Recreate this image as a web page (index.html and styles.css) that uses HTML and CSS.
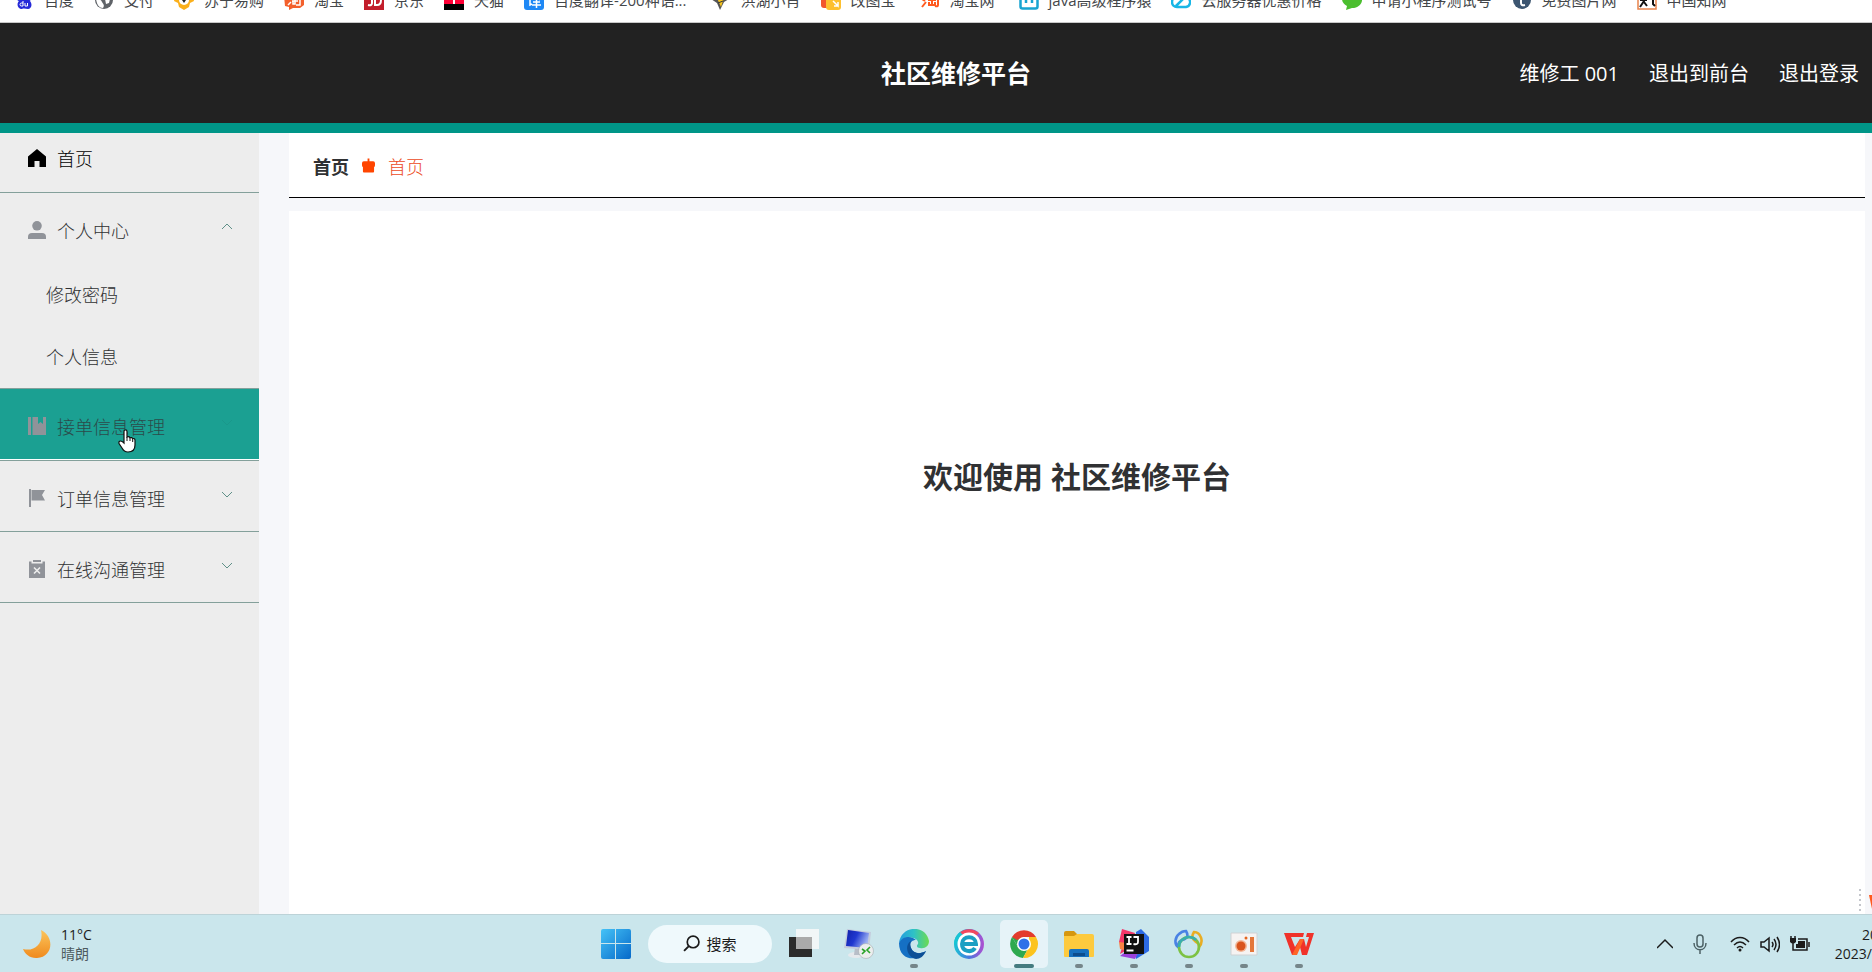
FILE: index.html
```
<!DOCTYPE html>
<html lang="zh-CN">
<head>
    <meta charset="UTF-8">
    <meta name="viewport" content="width=device-width, initial-scale=1.0">
    <title>社区维修平台</title>
    <link rel="stylesheet" href="styles.css">
</head>
<body>

    <!-- 书签栏 -->
    <nav class="bookmarks">
        <a href="#"><svg viewBox="0 0 20 20"><g fill="#2529d8"><ellipse cx="5" cy="8" rx="2" ry="3"/><ellipse cx="8" cy="4" rx="2" ry="3"/><ellipse cx="12" cy="4" rx="2" ry="3"/><ellipse cx="15" cy="8" rx="2" ry="3"/><path d="M10 7c3 0 4 2 6 4 3 4 1 8-2 8-2 0-4-1-6 0-4 0-6-5-3-8 2-2 2-4 5-4z"/></g><path d="M9 11v5H7.500a1.500 1.500 0 0 1 0-3H9M11 13v3h2.500v-3" fill="none" stroke="#fff"/></svg>百度</a>
        <a href="#"><svg viewBox="0 0 20 20"><circle cx="10" cy="10" r="9" fill="#5f6368"/><path d="M2 9c4 0 5 1 6 3s3 3 1 6c-4 0-6-3-7-9zM11 9h5l-1 4-3 1z" fill="#fff"/></svg>支付</a>
        <a href="#"><svg viewBox="0 0 20 20"><path d="M2 2h16l2 9-4 2-1 4-5 3-5-3-1-4-4-2z" fill="#fbb01b"/><circle cx="10" cy="10" r="5" fill="#fff"/><path d="M8 10h4l-2 3z" fill="#222"/></svg>苏宁易购</a>
        <a href="#"><svg viewBox="0 0 20 20"><path d="M2 1h16l2 3v11l-4 3H9l-4 2v-3l-4-1L0 6z" fill="#f3602c"/><path d="M4 7l2 2M4 15l3-3M8 7h8v8h-4M8 11h6M11 7v7H9v-3" fill="none" stroke="#fff" stroke-width="1.500"/></svg>淘宝</a>
        <a href="#"><svg viewBox="0 0 20 20"><path d="M0 0h20v20H0z" fill="#c21d2b"/><path d="M8 5v8q0 3-4 2M11 6v9h2q4 0 4-5t-4-4z" fill="none" stroke="#fff" stroke-width="2"/></svg>京东</a>
        <a href="#"><svg viewBox="0 0 20 20"><path d="M0 0h20v20H0z" fill="#ff0036"/><path d="M0 14h20v6H0z"/><path d="M6 7h8M10 7v7" stroke="#fff" stroke-width="2"/></svg>天猫</a>
        <a href="#" class="wide"><svg viewBox="0 0 20 20"><rect width="20" height="20" rx="3" fill="#1e88f5"/><path d="M4 5l2 1M3 9h3v6l2-1M9 5h7l-6 4M10 6l6 4M9 12h7M8 15h9M12.500 9v9" fill="none" stroke="#fff" stroke-width="1.500"/></svg>百度翻译-200种语...</a>
        <a href="#"><svg viewBox="0 0 20 20"><path d="M1 9l4-4 5 3 5-4 4 5-5 3-4 8-3-7z" fill="#555"/><path d="M7 8h7l-3 9z" fill="#f7c51e"/><path d="M8 13l5-2" stroke="#333"/></svg>洪湖小肖</a>
        <a href="#" class="wide"><svg viewBox="0 0 20 20"><rect width="14" height="18" rx="3" fill="#f2562c"/><rect x="5" y="3" width="15" height="17" rx="3" fill="#fdc02f"/><path d="M12 11l5 5v-4m0 4h-4" fill="none" stroke="#fff" stroke-width="1.500"/></svg>改图宝</a>
        <a href="#" class="wide"><svg viewBox="0 0 20 20"><path d="M3 4l3 2M2 9l3 2M2 17l4-5M9 3l-2 4M8 6h10v9q0 2-3 1M8 10h8M9 12v3h6v-3M12 8v7" fill="none" stroke="#ff5a1f" stroke-width="2"/></svg>淘宝网</a>
        <a href="#"><svg viewBox="0 0 20 20"><rect x="1.500" y="2" width="17" height="16.500" rx="2" fill="#fff" stroke="#18a4d1" stroke-width="2.500"/><path d="M7 8v5M13 8v5" stroke="#18a4d1" stroke-width="2.500"/></svg>java高级程序猿</a>
        <a href="#"><svg viewBox="0 0 20 20"><path d="M6 17a5 5 0 0 1 0-10 6 6 0 0 1 11 1 5 5 0 0 1-2 9zM5 16l9-9" fill="none" stroke="#18b6e6" stroke-width="2.500"/></svg>云服务器优惠价格</a>
        <a href="#"><svg viewBox="0 0 20 20"><path d="M10 1c14 0 13 17 0 17l-6 2 1-4C-4 11 0 1 10 1z" fill="#4bbe2f"/></svg>申请小程序测试号</a>
        <a href="#"><svg viewBox="0 0 20 20"><circle cx="10" cy="10" r="9" fill="#3c5570"/><path d="M9 4v9q0 3 4 2M7 8h5" fill="none" stroke="#fff" stroke-width="2"/></svg>免费图片网</a>
        <a href="#"><svg viewBox="0 0 20 20"><path d="M1 1h18v18H1z" fill="#fff" stroke="#e8834b" stroke-width="1.500"/><path d="M5 4l3 2H3M3 10h7M7 6v5l-4 6M7 12l3 4M12 8h4v6l2 2" fill="none" stroke="#111" stroke-width="2"/></svg>中国知网</a>
    </nav>

    <header class="header">
        <h1 class="header-title">社区维修平台</h1>
        <div class="header-links">
            <span>维修工 001</span>
            <a href="#">退出到前台</a>
            <a href="#">退出登录</a>
        </div>
    </header>

    <div class="container">
        <aside class="sidebar">
            <ul class="menu">
                <li class="menu-item home">
                    <button type="button"><svg class="icon" viewBox="0 0 18 18"><path d="M9 0l9 7.500V18h-6.500v-6h-5v6H0V7.500z"/></svg>首页</button>
                </li>
                <li class="menu-item">
                    <button type="button" aria-expanded="true"><svg class="icon" viewBox="0 0 18 18"><circle cx="9" cy="4.800" r="4.800"/><path d="M0 18v-2q0-4 4-4h10q4 0 4 4v2z"/></svg>个人中心<svg class="arrow" viewBox="0 0 12 8"><path d="M1 7l5-5 5 5"/></svg></button>
                    <ul class="submenu">
                        <li><a href="#">修改密码</a></li>
                        <li><a href="#">个人信息</a></li>
                    </ul>
                </li>
                <li class="menu-item active">
                    <button type="button"><svg class="icon" viewBox="0 0 18 18"><path d="M0 0h3v18H0zM4.500 0H10v7l2.500-2L15 7V0h3v18H4.500z"/></svg>接单信息管理<svg class="arrow" viewBox="0 0 12 8"><path d="M1 2l5 5 5-5"/></svg></button>
                    <!-- 鼠标指针 -->
                    <svg class="pointer" viewBox="0 0 18 24"><path d="M6 14V2.500q0-1.700 1.500-1.700T9 2.500V8q2-1 3 .8 2-.8 2.600.8 2.400-.5 2.400 1.800V16q0 7-7 7-4 0-6-4l-3-4.500Q.500 12 2.500 12 4 12 6 14z" fill="#fff" stroke="#111" stroke-width="1.200"/><path d="M9 8v4M12 9v3M14.700 10v3" stroke="#111"/></svg>
                </li>
                <li class="menu-item">
                    <button type="button"><svg class="icon" viewBox="0 0 18 18"><path d="M1 0h2v18H1zM3.500 1H17l-3 5 3 5.500H3.500z"/></svg>订单信息管理<svg class="arrow" viewBox="0 0 12 8"><path d="M1 2l5 5 5-5"/></svg></button>
                </li>
                <li class="menu-item">
                    <button type="button"><svg class="icon" viewBox="0 0 18 18"><path d="M5 0h8v2H5zM1 1.500h2.500V3.500h11V1.500H17V18H1z"/><path d="M6 7.500l6 6M12 7.500l-6 6" stroke="#ededed" stroke-width="1.600"/></svg>在线沟通管理<svg class="arrow" viewBox="0 0 12 8"><path d="M1 2l5 5 5-5"/></svg></button>
                </li>
            </ul>
        </aside>

        <main class="main">
            <div class="breadcrumb">
                <strong>首页</strong>
                <svg viewBox="0 0 14 16"><path d="M6 0h2v3h4q2 0 2 2v2q0 2-1 2v5q0 1-1 1H2q-1 0-1-1V9Q0 9 0 7V5q0-2 2-2h4z" fill="#ff4500"/></svg>
                <a href="#">首页</a>
            </div>
            <section class="content">
                <h2>欢迎使用 社区维修平台</h2>
            </section>
        </main>

        <div class="float-bar">
            <svg viewBox="0 0 14 26"><path d="M2 1v24" stroke="#c4c6cb" stroke-width="2" stroke-dasharray="2 3"/><path d="M11 7h10v14h-7z" fill="#ff5a1f"/></svg>
        </div>
    </div>

    <!-- 任务栏 -->
    <footer class="taskbar">
        <div class="weather">
            <svg viewBox="0 0 28 30"><defs><linearGradient id="moon" x2="0" y2="1"><stop stop-color="#fbc55c"/><stop offset="1" stop-color="#f08a1d"/></linearGradient></defs><path d="M18 1c14 7 12 27-4 28C7 29.500 2 25 0 20c12 3 21-6 18-19z" fill="url(#moon)"/></svg>
            <div>
                <div>11°C</div>
                <div class="weather-text">晴朗</div>
            </div>
        </div>

        <div class="apps">
            <button type="button" class="app" aria-label="开始">
                <svg viewBox="0 0 30 30"><defs><linearGradient id="win" x2="1" y2="1"><stop stop-color="#45c3f7"/><stop offset="1" stop-color="#0669c9"/></linearGradient></defs><path d="M2 0h12v14H0V2q0-2 2-2zM15 0h13q2 0 2 2v12H15zM0 15h14v15H2q-2 0-2-2zM15 15h15v13q0 2-2 2H15z" fill="url(#win)"/></svg>
            </button>
            <button type="button" class="search"><svg viewBox="0 0 16 16"><circle cx="9.500" cy="6.500" r="5.500" fill="none" stroke="#1b1b1b" stroke-width="1.600"/><path d="M5.500 10.500L1 15" stroke="#1b1b1b" stroke-width="1.800"/></svg>搜索</button>
            <button type="button" class="app" aria-label="任务视图">
                <svg viewBox="0 0 30 30"><path d="M0 8h23v20H0z" fill="#2b2b2b"/><path d="M7 0h23v20H7z" fill="#fafafa" opacity=".8"/><path d="M7 8h16v12H7z" fill="#aaa"/></svg>
            </button>
            <button type="button" class="app" aria-label="远程桌面">
                <svg viewBox="0 0 30 30"><defs><linearGradient id="screen" y2=".4"><stop stop-color="#1020a8"/><stop offset=".5" stop-color="#2038d0"/><stop offset="1" stop-color="#9cb0f2"/></linearGradient></defs><ellipse cx="12" cy="26" rx="8" ry="3" fill="#e6e9ed"/><path d="M11 18l6 1-1 7h-6z" fill="#b8bec8"/><path d="M3 0l24 3-2 18L0 19z" fill="#c4cbdc"/><path d="M4 1l21 3-2 15L2 17z" fill="url(#screen)"/><circle cx="22" cy="22" r="7.500" fill="#eceeee" stroke="#a8adb0" stroke-width=".6"/><path d="M18 20l3 2-3 3M26 18l-3 3 3 3" fill="none" stroke="#29a329" stroke-width="1.600"/></svg>
            </button>
            <button type="button" class="app running" aria-label="Edge">
                <svg viewBox="0 0 30 30"><defs><linearGradient id="edge"><stop stop-color="#219ce0"/><stop offset=".5" stop-color="#2fc2c5"/><stop offset="1" stop-color="#6ddb50"/></linearGradient></defs><path d="M0 14C2-4 27-5 30 12c0 5-4 8-9 7-3 0-4-2-2-4 2-7-13-10-19-1z" fill="url(#edge)"/><path d="M0 14c3-7 12-8 17-3-5 0-7 4-5 8 2 5 8 7 15 3-5 10-27 12-27-8z" fill="#1570c4"/><path d="M12 12c-7 4-4 16 5 18 4 0 8-3 10-8-7 4-13 2-15-3-1-3-1-5 0-7z" fill="#0d4f96"/></svg>
            </button>
            <button type="button" class="app" aria-label="浏览器">
                <svg viewBox="0 0 30 30"><defs><linearGradient id="ring" x2="1"><stop stop-color="#18c4d4"/><stop offset=".5" stop-color="#4878df"/><stop offset="1" stop-color="#b04fd0"/></linearGradient></defs><circle cx="15" cy="15" r="15" fill="url(#ring)"/><path d="M5 4A15 15 0 0 1 25 4l-3 3H8z" fill="#f0485e"/><path d="M0 15A15 15 0 0 1 6 3l3 3-5 9z" fill="#18c4d4"/><circle cx="15" cy="15" r="11.500" fill="#fff"/><path d="M8 15h14c0-9-14-9-14 0 0 8 10 9 13 4" fill="none" stroke="#1b9fc3" stroke-width="4"/></svg>
            </button>
            <button type="button" class="app running current" aria-label="Chrome">
                <svg viewBox="0 0 30 30"><path d="M3 8a14 14 0 0 0 11 21l6-11-5 2-6-2z" fill="#2da94f"/><path d="M27 8a14 14 0 0 1-13 21l6-11V8z" fill="#fcc31e"/><path d="M3 8l6 10 3-10z" fill="#2da94f"/><path d="M3 8a14 14 0 0 1 24 0H15l-7 3z" fill="#e33b2e"/><circle cx="15" cy="15" r="7" fill="#fff"/><circle cx="15" cy="15" r="5.500" fill="#2f70e8"/></svg>
            </button>
            <button type="button" class="app running" aria-label="文件资源管理器">
                <svg viewBox="0 0 30 30"><path d="M0 4q0-2 2-2h8l3 3v5H0z" fill="#d6970f"/><path d="M0 7h10l3-2h15q2 0 2 2v20q0 1-1 1H1q-1 0-1-1z" fill="#fdca3e"/><path d="M5 28v-6q0-2 2-2h16q2 0 2 2v6z" fill="#1670be"/><path d="M9 24h12v3H9z" fill="#0c4d8d"/></svg>
            </button>
            <button type="button" class="app running" aria-label="IntelliJ IDEA">
                <svg viewBox="0 0 30 30"><path d="M3 0l13 4-6 16-9 5 3-9-4-3z" fill="#f33568"/><path d="M0 13l8 1v8l-7-2z" fill="#f98243"/><path d="M17 3l5-3 8 8v14l-13 8z" fill="#2c6ae5"/><path d="M1 27l9-7 9 4-3 6z" fill="#9b42dd"/><path d="M5 5h20v20H5z" fill="#111"/><path d="M7.500 8h5M10 8v7M7.500 15h5M14.500 8H19v5q0 3-4.500 2M7.500 21.500h7" fill="none" stroke="#fff" stroke-width="1.800"/></svg>
            </button>
            <button type="button" class="app running" aria-label="Navicat">
                <svg viewBox="0 0 30 30"><g fill="none" stroke-width="2.600"><path d="M12 2c3 5 1 8-4 9-3 1-4 3-4 7-4-3-3-10 1-13 2-2 4-3 7-3z" stroke="#4a82e4"/><path d="M20 3c-3 5-2 7 2 10 3 2 3 3 3 5 5-5 2-15-5-15z" stroke="#e9ad23"/><circle cx="15" cy="18" r="10" stroke="#7cc243"/><path d="M5 18a10 10 0 0 1 17-7" stroke="#38aeb0"/></g></svg>
            </button>
            <button type="button" class="app running" aria-label="录屏">
                <svg viewBox="0 0 30 30"><path d="M2 4h26v22H2z" fill="#f6f3f2" stroke="#cfd2d4"/><circle cx="12" cy="17" r="6" fill="#f3b899"/><circle cx="12" cy="17" r="4.500" fill="#d9541e"/><circle cx="17" cy="9" r="1.500" fill="#e4651f"/><path d="M21 8h4v15h-4z" fill="#e4773a"/></svg>
            </button>
            <button type="button" class="app running" aria-label="WPS">
                <svg viewBox="0 0 30 30"><path d="M0 4h20l-1 4H7l4 10 5-8h4l2 8 3-10h-3l1-4h7l-7 22h-5l-2-8-4 8H8z" fill="#f0322a"/><path d="M16 10h4l-7 16H8z" fill="#ff6427"/></svg>
            </button>
        </div>

        <div class="tray">
            <svg class="tray-up" viewBox="0 0 16 20"><path d="M0 14l8-8 8 8"/></svg>
            <svg class="tray-mic" viewBox="0 0 14 20"><rect x="4" y="1" width="6" height="12" rx="3"/><path d="M1 9c0 9 12 9 12 0M7 16v4"/></svg>
            <svg viewBox="0 0 20 20"><path d="M1 8c5-6 13-6 18 0M4 11c4-4 8-4 12 0M7 14c2-2 4-2 6 0"/><circle cx="10" cy="16" r="1.500" fill="#1b1b1b" stroke="none"/></svg>
            <svg viewBox="0 0 20 20"><path d="M1 8h3l5-4v13l-5-4H1zM12 8q2 2.500 0 5M14 5q4 5.500 0 11M17 3q5 7.500 0 15"/></svg>
            <svg viewBox="0 0 20 20"><path d="M1 2v3M5 2v3M3 9v7h3M8 5h9v11H6M19 8v5"/><path d="M0 4h6v4q-3 3-6 0zM8 7h7v7H6v-4h2z" fill="#1b1b1b" stroke="none"/></svg>
            <div class="clock">
                <div class="clock-time">20</div>
                <div>2023/</div>
            </div>
        </div>
    </footer>

</body>
</html>
```
FILE: styles.css
```
* {
    box-sizing: border-box;
}

body {
    font-family: 'Open Sans', 'Noto Sans CJK SC', sans-serif;
    margin: 0;
    height: 100vh;
    display: flex;
    flex-direction: column;
    background-color: #fff;
    color: #303133;
    overflow: hidden;
}

a {
    color: inherit;
    text-decoration: none;
}

ul {
    list-style: none;
    margin: 0;
    padding: 0;
}

button {
    border: none;
    background: none;
    padding: 0;
    font-family: inherit;
    color: inherit;
    cursor: pointer;
}

svg {
    display: block;
    flex-shrink: 0;
}

/* 书签栏，上半部分滚出窗口 */
.bookmarks {
    display: flex;
    align-items: center;
    gap: 20px;
    height: 45px;
    margin-top: -22px;
    padding-left: 14px;
    border-bottom: 1px solid #c8c8c8;
    font-size: 15px;
    line-height: 20px;
    color: #44474a;
    white-space: nowrap;
    flex-shrink: 0;
}

.bookmarks a {
    display: flex;
    align-items: center;
    gap: 10px;
}

.bookmarks .wide {
    margin-right: 4px;
}

.bookmarks svg {
    width: 20px;
    height: 20px;
}

.header {
    display: grid;
    grid-template-columns: 1fr auto 1fr;
    align-items: center;
    height: 110px;
    padding-left: 40px;
    padding-bottom: 2px;
    background-color: #222;
    border-bottom: 10px solid #009688;
    color: #fff;
    flex-shrink: 0;
}

.header-title {
    grid-column: 2;
    margin: 0;
    font-size: 25px;
}

.header-links {
    display: flex;
    justify-content: flex-end;
    gap: 30px;
    padding-right: 13px;
    font-size: 20px;
}

.container {
    position: relative;
    display: flex;
    flex: 1;
    min-height: 0;
    background-color: #f6f7fa;
}

.sidebar {
    width: 259px;
    background-color: #ededed;
    flex-shrink: 0;
}

.menu {
    font-weight: 300;
}

.menu-item {
    position: relative;
    border-bottom: 1px solid #84a09b;
}

.menu-item button {
    display: flex;
    align-items: center;
    gap: 11px;
    width: 100%;
    height: 70px;
    padding: 4px 26px 0 28px;
    font-size: 18px;
    font-weight: inherit;
    text-align: left;
}

.menu-item.home button {
    height: 59px;
    padding-top: 0;
    padding-bottom: 9px;
    color: #000;
}

.menu-item.active {
    padding-bottom: 1px;
    background-color: #fff;
}

.menu-item.active button {
    background-color: #1ba092;
    color: #2b4a4a;
}

.icon {
    width: 18px;
    height: 18px;
    fill: #909399;
}

.home .icon {
    fill: #000;
}

.arrow {
    width: 12px;
    height: 8px;
    margin-left: auto;
    margin-bottom: 8px;
    fill: none;
    stroke: #5f9088;
}

.active .arrow {
    stroke: #1a988b;
}

.submenu {
    padding-bottom: 1px;
}

.submenu a {
    display: flex;
    align-items: center;
    height: 62px;
    padding-left: 46px;
    font-size: 18px;
}

.pointer {
    position: absolute;
    left: 118px;
    top: 40px;
    width: 18px;
    height: 24px;
}

.main {
    flex: 1;
    display: flex;
    flex-direction: column;
    gap: 13px;
    padding: 0 7px 0 30px;
}

.breadcrumb {
    display: flex;
    align-items: center;
    gap: 13px;
    height: 65px;
    padding: 2px 0 0 24px;
    background-color: #fff;
    border-bottom: 1px solid #000;
    font-size: 18px;
}

.breadcrumb svg {
    width: 13px;
    height: 16px;
}

.breadcrumb a {
    color: #ec4a1c;
    font-weight: 300;
}

.content {
    flex: 1;
    padding-top: 244px;
    background-color: #fff;
    text-align: center;
}

.content h2 {
    margin: 0;
    font-size: 30px;
    line-height: 44px;
}

.float-bar {
    position: absolute;
    right: 0;
    bottom: 0;
}

.float-bar svg {
    width: 14px;
    height: 26px;
}

.taskbar {
    display: grid;
    grid-template-columns: 1fr auto 1fr;
    align-items: center;
    height: 58px;
    padding-left: 43px;
    background-color: #cae6ec;
    border-top: 1px solid #bdd3d8;
    color: #1b1b1b;
    font-size: 14px;
    line-height: 19px;
    flex-shrink: 0;
}

.weather {
    display: flex;
    align-items: center;
    gap: 10px;
    margin-left: -20px;
}

.weather svg {
    width: 28px;
    height: 30px;
}

.weather-text {
    color: #4d5a5e;
}

.apps {
    display: flex;
    align-items: center;
    gap: 7px;
}

.app {
    position: relative;
    display: flex;
    align-items: center;
    justify-content: center;
    width: 48px;
    height: 48px;
    border-radius: 5px;
}

.app svg {
    width: 30px;
    height: 30px;
}

/* 运行中的程序下方的小横条 */
.running::after {
    content: '';
    position: absolute;
    left: 20px;
    bottom: 0;
    width: 8px;
    height: 4px;
    border-radius: 2px;
    background-color: #75868a;
}

.current {
    background-color: #e6f3f8;
}

.current::after {
    left: 14px;
    width: 20px;
    background-color: #447b80;
}

.search {
    display: flex;
    align-items: center;
    justify-content: center;
    gap: 6px;
    width: 124px;
    height: 38px;
    margin: 0 1px;
    border-radius: 19px;
    background-color: #eff9fc;
    font-size: 15px;
}

.search svg {
    width: 17px;
    height: 17px;
}

.tray {
    display: flex;
    align-items: center;
    justify-content: flex-end;
    gap: 10px;
}

.tray svg {
    width: 20px;
    height: 20px;
    fill: none;
    stroke: #1b1b1b;
    stroke-width: 1.5;
}

.tray .tray-up {
    width: 16px;
    margin-right: 10px;
}

.tray .tray-mic {
    width: 14px;
    margin-right: 13px;
    stroke: #4d6266;
}

.clock {
    margin-left: 15px;
    text-align: right;
}

.clock-time {
    margin-right: -6px;
}
```
